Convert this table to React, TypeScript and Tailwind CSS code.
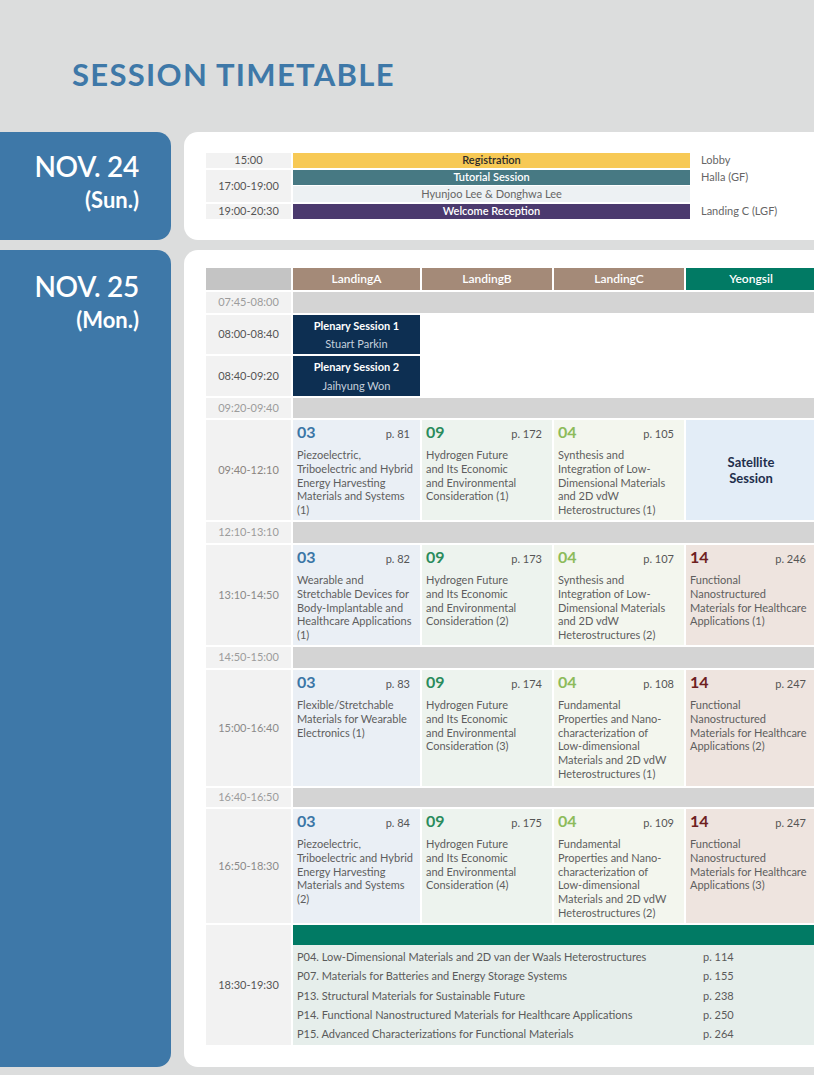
import React from "react";

type SessProps = {
  num: string;
  numColor: string;
  page: string;
  lines: string[];
  bg: string;
};

function Sess({ num, numColor, page, lines, bg }: SessProps) {
  return (
    <div className={`${bg} pl-[4px] pr-[10px] pt-[2px]`}>
      <div className="flex justify-between items-baseline h-[20px]">
        <span className={`text-[16px] leading-[20px] font-bold ${numColor}`}>{num}</span>
        <span className="text-[11px] leading-[20px] text-[#555]">{page}</span>
      </div>
      <div className="mt-[6px] text-[11px] leading-[13.8px] text-[#5e5e5e] whitespace-nowrap">
        {lines.map((l, i) => (
          <div key={i}>{l}</div>
        ))}
      </div>
    </div>
  );
}

const COLS = "grid grid-cols-[85px_127px_130px_130px_130px] gap-x-[2px]";

function TimeCell({ t, c }: { t: string; c: string }) {
  return (
    <div className={`bg-[#f2f2f2] flex items-center justify-center text-[11px] ${c}`}>{t}</div>
  );
}

function BreakRow({ t, h }: { t: string; h: string }) {
  return (
    <div className={`${COLS} ${h}`}>
      <TimeCell t={t} c="text-[#9c9c9c]" />
      <div className="col-span-4 bg-[#d4d4d4]" />
    </div>
  );
}

const S03 = "bg-[#eaeff5]";
const S09 = "bg-[#edf3ee]";
const S04 = "bg-[#f3f6ee]";
const S14 = "bg-[#eee4df]";
const C03 = "text-[#3b76a6]";
const C09 = "text-[#2a8b5c]";
const C04 = "text-[#8dbb5a]";
const C14 = "text-[#6e1f1f]";

function DatePanel({ d, w, pt }: { d: string; w: string; pt: string }) {
  return (
    <div className={`w-[171px] shrink-0 rounded-r-[14px] bg-[#3e78a8] flex flex-col items-end pr-[32px] ${pt} text-white`}>
      <div className="text-[28px] leading-[34px] font-semibold tracking-[-0.3px]">{d}</div>
      <div className="mt-[3px] text-[22px] leading-[27px] font-bold">{w}</div>
    </div>
  );
}

export default function App() {
  return (
    <div className="w-[814px] h-[1075px] overflow-hidden bg-[#dcdddd] font-['Lato','Noto_Sans',sans-serif]">
      <div className="h-[132px] pt-[54px] pl-[72px]">
        <h1 className="text-[31px] leading-[40px] font-bold text-[#3e78a8] tracking-[1.3px]">SESSION TIMETABLE</h1>
      </div>

      {/* Nov 24 */}
      <div className="flex gap-[13px] h-[108px]">
        <DatePanel d="NOV. 24" w="(Sun.)" pt="pt-[17px]" />
        <div className="w-[660px] shrink-0 bg-white rounded-l-[14px] pt-[21px] pl-[22px]">
          <div className="grid grid-cols-[85px_397px_auto] gap-x-[2px] text-[11px]">
            <div className="bg-[#f2f2f2] h-[15px] flex items-center justify-center text-[#555]">15:00</div>
            <div className="bg-[#f7c955] h-[15px] flex items-center justify-center text-[#2b2b2b] font-semibold">Registration</div>
            <div className="pl-[9px] h-[15px] flex items-center text-[#666]">Lobby</div>

            <div className="col-span-3 h-[2px]" />

            <div className="row-span-3 bg-[#f2f2f2] flex items-center justify-center text-[#555]">17:00-19:00</div>
            <div className="bg-[#477983] h-[15px] flex items-center justify-center text-white font-semibold">Tutorial Session</div>
            <div className="pl-[9px] h-[15px] flex items-center text-[#666]">Halla (GF)</div>
            <div className="h-[1px]" />
            <div className="h-[1px]" />
            <div className="bg-[#edf1f3] h-[16px] flex items-center justify-center text-[#666]">Hyunjoo Lee &amp; Donghwa Lee</div>
            <div />

            <div className="col-span-3 h-[2px]" />

            <div className="bg-[#f2f2f2] h-[15px] flex items-center justify-center text-[#555]">19:00-20:30</div>
            <div className="bg-[#4b3a6e] h-[15px] flex items-center justify-center text-white font-semibold">Welcome Reception</div>
            <div className="pl-[9px] h-[15px] flex items-center text-[#666]">Landing C (LGF)</div>
          </div>
        </div>
      </div>

      <div className="h-[10px]" />

      {/* Nov 25 */}
      <div className="flex gap-[13px] h-[817px]">
        <DatePanel d="NOV. 25" w="(Mon.)" pt="pt-[19px]" />
        <div className="w-[660px] shrink-0 bg-white rounded-l-[14px] pt-[18px] pl-[22px]">
          <div className="flex flex-col gap-y-[2px]">
            {/* header */}
            <div className={`${COLS} h-[22px] text-[12px] font-semibold text-white`}>
              <div className="bg-[#c4c4c4]" />
              <div className="bg-[#a48a78] flex items-center justify-center">LandingA</div>
              <div className="bg-[#a48a78] flex items-center justify-center">LandingB</div>
              <div className="bg-[#a48a78] flex items-center justify-center">LandingC</div>
              <div className="bg-[#017a64] flex items-center justify-center">Yeongsil</div>
            </div>

            <BreakRow t="07:45-08:00" h="h-[21px]" />

            <div className={`${COLS} h-[39px]`}>
              <TimeCell t="08:00-08:40" c="text-[#555]" />
              <div className="bg-[#0d2f52] flex flex-col items-center justify-center text-[11px]">
                <div className="font-bold text-white leading-[18px]">Plenary Session 1</div>
                <div className="text-[#c5d0dc] leading-[18px]">Stuart Parkin</div>
              </div>
              <div />
              <div />
              <div />
            </div>

            <div className={`${COLS} h-[40px]`}>
              <TimeCell t="08:40-09:20" c="text-[#555]" />
              <div className="bg-[#0d2f52] flex flex-col items-center justify-center text-[11px]">
                <div className="font-bold text-white leading-[19px]">Plenary Session 2</div>
                <div className="text-[#c5d0dc] leading-[19px]">Jaihyung Won</div>
              </div>
              <div />
              <div />
              <div />
            </div>

            <BreakRow t="09:20-09:40" h="h-[20px]" />

            <div className={`${COLS} h-[100px]`}>
              <TimeCell t="09:40-12:10" c="text-[#8a8480]" />
              <Sess bg={S03} num="03" numColor={C03} page="p. 81" lines={["Piezoelectric,", "Triboelectric and Hybrid", "Energy Harvesting", "Materials and Systems", "(1)"]} />
              <Sess bg={S09} num="09" numColor={C09} page="p. 172" lines={["Hydrogen Future", "and Its Economic", "and Environmental", "Consideration (1)"]} />
              <Sess bg={S04} num="04" numColor={C04} page="p. 105" lines={["Synthesis and", "Integration of Low-", "Dimensional Materials", "and 2D vdW", "Heterostructures (1)"]} />
              <div className="bg-[#e3edf7] flex flex-col items-center justify-center text-[13px] leading-[16px] font-bold text-[#1f2f4c]">
                <div>Satellite</div>
                <div>Session</div>
              </div>
            </div>

            <BreakRow t="12:10-13:10" h="h-[21px]" />

            <div className={`${COLS} h-[100px]`}>
              <TimeCell t="13:10-14:50" c="text-[#8a8a8a]" />
              <Sess bg={S03} num="03" numColor={C03} page="p. 82" lines={["Wearable and", "Stretchable Devices for", "Body-Implantable and", "Healthcare Applications", "(1)"]} />
              <Sess bg={S09} num="09" numColor={C09} page="p. 173" lines={["Hydrogen Future", "and Its Economic", "and Environmental", "Consideration (2)"]} />
              <Sess bg={S04} num="04" numColor={C04} page="p. 107" lines={["Synthesis and", "Integration of Low-", "Dimensional Materials", "and 2D vdW", "Heterostructures (2)"]} />
              <Sess bg={S14} num="14" numColor={C14} page="p. 246" lines={["Functional", "Nanostructured", "Materials for Healthcare", "Applications (1)"]} />
            </div>

            <BreakRow t="14:50-15:00" h="h-[21px]" />

            <div className={`${COLS} h-[116px]`}>
              <TimeCell t="15:00-16:40" c="text-[#8a8a8a]" />
              <Sess bg={S03} num="03" numColor={C03} page="p. 83" lines={["Flexible/Stretchable", "Materials for Wearable", "Electronics (1)"]} />
              <Sess bg={S09} num="09" numColor={C09} page="p. 174" lines={["Hydrogen Future", "and Its Economic", "and Environmental", "Consideration (3)"]} />
              <Sess bg={S04} num="04" numColor={C04} page="p. 108" lines={["Fundamental", "Properties and Nano-", "characterization of", "Low-dimensional", "Materials and 2D vdW", "Heterostructures (1)"]} />
              <Sess bg={S14} num="14" numColor={C14} page="p. 247" lines={["Functional", "Nanostructured", "Materials for Healthcare", "Applications (2)"]} />
            </div>

            <BreakRow t="16:40-16:50" h="h-[19px]" />

            <div className={`${COLS} h-[114px]`}>
              <TimeCell t="16:50-18:30" c="text-[#8a8a8a]" />
              <Sess bg={S03} num="03" numColor={C03} page="p. 84" lines={["Piezoelectric,", "Triboelectric and Hybrid", "Energy Harvesting", "Materials and Systems", "(2)"]} />
              <Sess bg={S09} num="09" numColor={C09} page="p. 175" lines={["Hydrogen Future", "and Its Economic", "and Environmental", "Consideration (4)"]} />
              <Sess bg={S04} num="04" numColor={C04} page="p. 109" lines={["Fundamental", "Properties and Nano-", "characterization of", "Low-dimensional", "Materials and 2D vdW", "Heterostructures (2)"]} />
              <Sess bg={S14} num="14" numColor={C14} page="p. 247" lines={["Functional", "Nanostructured", "Materials for Healthcare", "Applications (3)"]} />
            </div>

            <div className={`${COLS} h-[120px]`}>
              <TimeCell t="18:30-19:30" c="text-[#555]" />
              <div className="col-span-4 flex flex-col">
                <div className="h-[20px] bg-[#017a64]" />
                <div className="flex-1 bg-[#e6eeeb] pt-[2px] pl-[4px] text-[11px] leading-[19.25px] text-[#5a5a5a]">
                  {[
                    ["P04. Low-Dimensional Materials and 2D van der Waals Heterostructures", "p. 114"],
                    ["P07. Materials for Batteries and Energy Storage Systems", "p. 155"],
                    ["P13. Structural Materials for Sustainable Future", "p. 238"],
                    ["P14. Functional Nanostructured Materials for Healthcare Applications", "p. 250"],
                    ["P15. Advanced Characterizations for Functional Materials", "p. 264"],
                  ].map(([a, b]) => (
                    <div key={a} className="flex">
                      <div className="w-[406px] whitespace-nowrap">{a}</div>
                      <div>{b}</div>
                    </div>
                  ))}
                </div>
              </div>
            </div>
          </div>
        </div>
      </div>
    </div>
  );
}
